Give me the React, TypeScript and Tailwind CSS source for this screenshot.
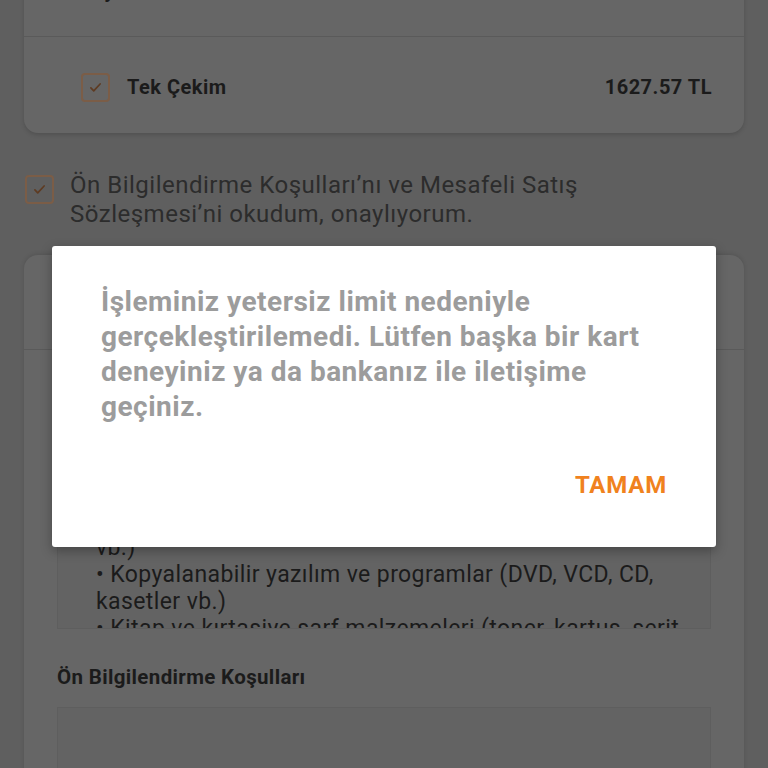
import React from "react";

function Check({ className = "" }: { className?: string }) {
  return (
    <span
      className={`flex h-[29px] w-[29px] shrink-0 items-center justify-center rounded-[4px] border-2 border-[#7b5d47] ${className}`}
    >
      <svg viewBox="0 0 24 24" className="h-[17px] w-[17px]" fill="none">
        <path d="M5.5 12.5l4 4.2L18.5 7" stroke="#5e3b22" strokeWidth="2.4" strokeLinecap="round" strokeLinejoin="round" />
      </svg>
    </span>
  );
}

export default function App() {
  const font = { fontFamily: "Roboto, 'Liberation Sans', sans-serif" };
  return (
    <div className="relative h-[768px] w-[768px] overflow-hidden bg-[#5f5f5f]" style={font}>
      {/* background page, dimmed */}
      <div className="flex flex-col px-[24px]">
        <div className="-mt-[40px] rounded-b-[14px] bg-[#666666] shadow-[0_2px_4px_rgba(0,0,0,0.15)]">
          <div className="h-[77px] border-b border-[#5a5a5a] px-[57px] pt-[16px] text-[20px] font-bold text-[#1b1b1b]">
            Kayıtlı Kartlarım
          </div>
          <div className="flex h-[96px] items-center justify-between px-[32px] pl-[57px] pt-[4px]">
            <div className="flex items-center gap-[17px]">
              <Check />
              <span className="text-[20px] font-bold tracking-[0.5px] text-[#1b1b1b]">Tek Çekim</span>
            </div>
            <span className="text-[20px] font-bold tracking-[0.5px] text-[#1b1b1b]">1627.57 TL</span>
          </div>
        </div>

        <div className="mt-[38px] flex items-start gap-[16px] pl-[1px]">
          <Check className="mt-[4px]" />
          <p className="text-[24px] leading-[29px] tracking-[0.5px] text-[#2c2c2c]">
            Ön Bilgilendirme Koşulları’nı ve Mesafeli Satış
            <br />
            Sözleşmesi’ni okudum, onaylıyorum.
          </p>
        </div>

        <div className="mt-[26px] rounded-t-[14px] bg-[#666666] shadow-[0_-1px_4px_rgba(0,0,0,0.12)]">
          <div className="h-[95px] border-b border-[#5a5a5a]" />
          <div className="px-[33px] pt-[24px]">
            <div className="h-[255px] overflow-hidden border border-[#5e5e5e] bg-[#636363] pl-[38px] pr-[8px] text-[23px] leading-[27px] tracking-[0.4px] text-[#1b1b1b]">
              <div className="flex h-full flex-col justify-end">
                <p className="whitespace-nowrap">• Taşınabilir depolama cihazları (USB bellek, hafıza kartı</p>
                <p>vb.)</p>
                <p className="whitespace-nowrap">• Kopyalanabilir yazılım ve programlar (DVD, VCD, CD,</p>
                <p>kasetler vb.)</p>
                <p className="-mb-[14px] whitespace-nowrap">• Kitap ve kırtasiye sarf malzemeleri (toner, kartuş, şerit</p>
              </div>
            </div>
            <h3 className="mt-[34px] text-[20.5px] font-bold leading-[28px] tracking-[0.35px] text-[#1b1b1b]">Ön Bilgilendirme Koşulları</h3>
            <div className="mt-[16px] h-[120px] border border-[#5e5e5e] bg-[#636363]" />
          </div>
        </div>
      </div>

      {/* dialog */}
      <div className="absolute left-[52px] top-[246px] flex h-[301px] w-[664px] flex-col rounded-[3px] bg-white px-[49px] pt-[38px] shadow-[0_4px_12px_rgba(0,0,0,0.3)]">
        <p className="text-[28px] font-bold leading-[35px] tracking-[0.5px] text-[#9c9c9c]">
          <span className="block whitespace-nowrap">İşleminiz yetersiz limit nedeniyle</span>
          <span className="block whitespace-nowrap">gerçekleştirilemedi. Lütfen başka bir kart</span>
          <span className="block whitespace-nowrap">deneyiniz ya da bankanız ile iletişime</span>
          <span className="block whitespace-nowrap">geçiniz.</span>
        </p>
        <div className="mt-auto mb-[44px] flex justify-end">
          <button className="text-[24px] font-bold tracking-[0.8px] text-[#f0821e]">TAMAM</button>
        </div>
      </div>
    </div>
  );
}
